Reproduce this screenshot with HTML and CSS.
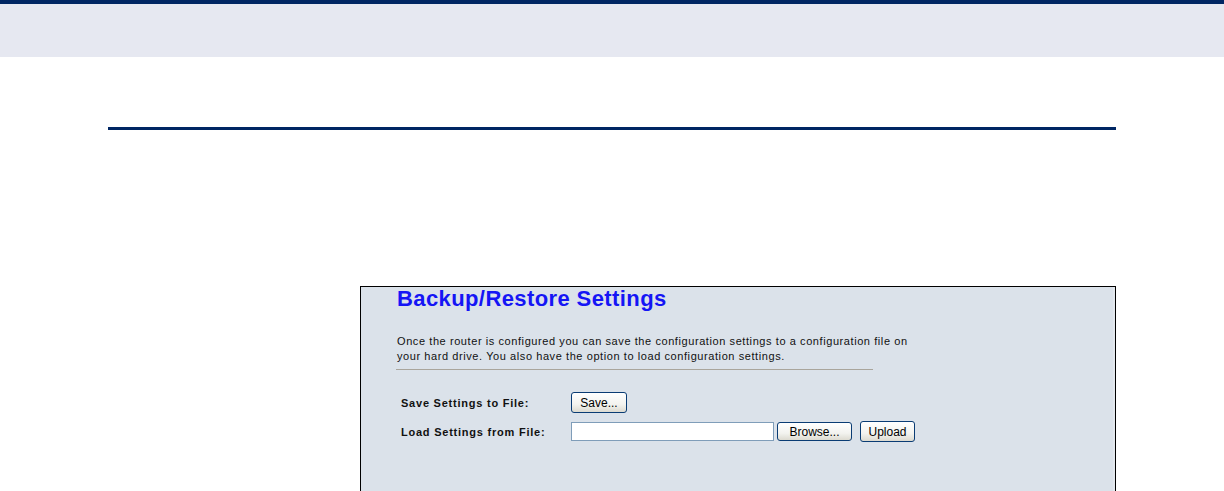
FILE: index.html
```html
<!DOCTYPE html>
<html lang="en">
<head>
<meta charset="utf-8">
<title>Backup/Restore Settings</title>
<link rel="stylesheet" href="styles.css">
</head>
<body>
<header class="topband"></header>
<main class="page">
  <hr class="rule">
  <section class="shot">
    <h1 class="shot-title">Backup/Restore Settings</h1>
    <p class="shot-text">Once the router is configured you can save the configuration settings to a configuration file on<br>your hard drive. You also have the option to load configuration settings.</p>
    <div class="divider"></div>
    <div class="form">
      <div class="row row-save">
        <span class="label">Save Settings to File:</span>
        <button class="btn btn-save" type="button">Save...</button>
      </div>
      <div class="row row-load">
        <span class="label">Load Settings from File:</span>
        <span class="file-input"></span>
        <button class="btn btn-browse" type="button">Browse...</button>
        <button class="btn btn-upload" type="button">Upload</button>
      </div>
    </div>
  </section>
</main>
</body>
</html>
```
FILE: styles.css
```css
html, body {
  margin: 0;
  padding: 0;
  background: #ffffff;
  overflow: hidden;
}
body {
  width: 1224px;
  height: 491px;
  font-family: "Liberation Sans", Arial, sans-serif;
}
.topband {
  height: 53px;
  border-top: 4px solid #002663;
  background: #e6e8f1;
}
.page {
  padding: 70px 0 0 108px;
}
.rule {
  margin: 0;
  width: 1008px;
  height: 3px;
  border: 0;
  background: #002663;
}
.shot {
  margin: 156px 0 0 252px;
  width: 756px;
  height: 220px;
  border: 1px solid #000000;
  background: #dbe2ea;
  box-shadow: inset -2px 0 0 #e3e8ee;
  padding: 0 0 0 35px;
  box-sizing: border-box;
}
.shot-title {
  margin: 0 0 0 1px;
  font-size: 22px;
  line-height: 24px;
  font-weight: bold;
  letter-spacing: 0.4px;
  color: #1515f5;
}
.shot-text {
  margin: 23px 0 0 1px;
  font-size: 11px;
  line-height: 15px;
  color: #111111;
  letter-spacing: 0.58px;
}
.divider {
  margin-top: 5px;
  width: 477px;
  height: 1px;
  background: #a9a59c;
}
.form {
  margin-top: 22px;
  display: flex;
  flex-direction: column;
  gap: 8px;
}
.row {
  display: flex;
  align-items: center;
  height: 21px;
}
.label {
  width: 175px;
  padding-left: 5px;
  box-sizing: border-box;
  font-size: 11px;
  font-weight: bold;
  color: #111111;
  letter-spacing: 0.77px;
}
.btn {
  margin: 0;
  padding: 0;
  font-family: "Liberation Sans", Arial, sans-serif;
  font-size: 12px;
  color: #000000;
  border: 1px solid #0a3c74;
  border-radius: 3px;
  background: linear-gradient(#ffffff, #f3f3ef 60%, #dcdad0);
  box-sizing: border-box;
}
.btn-save {
  width: 56px;
  height: 21px;
}
.file-input {
  width: 203px;
  height: 19px;
  box-sizing: border-box;
  border: 1px solid #7f9db9;
  background: #ffffff;
}
.btn-browse {
  margin-left: 3px;
  width: 75px;
  height: 19px;
}
.btn-upload {
  margin-left: 8px;
  width: 55px;
  height: 21px;
}
```
